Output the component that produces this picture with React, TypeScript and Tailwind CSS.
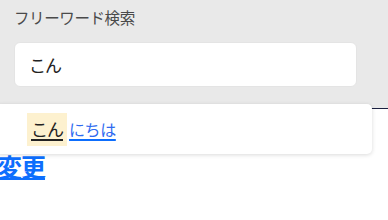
import React from "react";

export default function App() {
  const font = { fontFamily: '"Noto Sans CJK JP", "Noto Sans", sans-serif' };
  return (
    <div className="relative w-[388px] h-[220px] overflow-hidden bg-white" style={font}>
      <div className="h-[109px] bg-[#e9e9e9] border-b border-[#1b2040] px-[14px] pt-[3px]">
        <div className="text-[15.5px] leading-[28px] tracking-[-0.4px] text-[#4a4a4a]">フリーワード検索</div>
        <div className="mt-[11px] w-[343px] h-[45px] rounded-[6px] bg-white border border-[#e4e4e4] flex items-center pl-[14px] text-[17px] tracking-[-1px] text-[#222]">
          こん
        </div>
      </div>
      <a href="#" className="block ml-[-3px] mt-[39px] text-[25px] leading-[36px] font-bold tracking-[-1px] text-[#0d6efd] underline decoration-2 w-fit">
        変更
      </a>
      <div className="absolute left-[-4px] top-[104px] w-[376px] h-[50px] bg-white rounded-[5px] shadow-[0_1px_4px_rgba(0,0,0,0.15)] flex items-center pl-[31px]">
        <span className="inline-flex items-center h-[33px] px-[4px] bg-[#fdf1cf]">
          <span className="text-[17px] leading-[24px] tracking-[-1px] text-[#222] underline decoration-[1.5px] underline-offset-[3px]">こん</span>
        </span>
        <a href="#" className="ml-[2px] text-[16px] leading-[24px] tracking-[-0.4px] text-[#2f6bf0] underline decoration-[1.5px] decoration-[#0d6efd] underline-offset-[3px]">
          にちは
        </a>
      </div>
    </div>
  );
}
